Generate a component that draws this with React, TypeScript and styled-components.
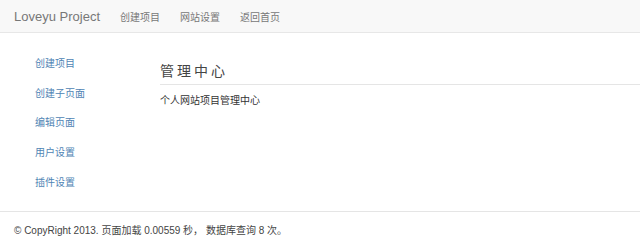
import * as React from 'react';
import styled, { createGlobalStyle } from 'styled-components';

const GlobalStyle = createGlobalStyle`
  html, body {
    margin: 0;
    padding: 0;
    background: #fff;
  }
  body {
    font-family: "Liberation Sans", "Noto Sans CJK SC", sans-serif;
    color: #333;
  }
`;

const Navbar = styled.div`
  height: 33px;
  background-color: #f8f8f8;
  border-bottom: 1px solid #e7e7e7;
  display: flex;
  align-items: center;
  padding-left: 14px;
  box-sizing: border-box;
`;

const Brand = styled.a`
  font-size: 13px;
  color: #777;
  text-decoration: none;
  margin-right: 20px;
`;

const NavLink = styled.a`
  font-size: 10px;
  color: #777;
  text-decoration: none;
  margin-right: 20px;
`;

const Body = styled.div`
  display: flex;
  padding-top: 20px;
  height: 158px;
  border-bottom: 1px solid #e5e5e5;
`;

const Sidebar = styled.ul`
  list-style: none;
  margin: 0;
  padding: 0 0 0 35px;
  width: 125px;
  display: flex;
  flex-direction: column;
`;

const SideItem = styled.li`
  height: 29.7px;
  line-height: 18px;
`;

const SideLink = styled.a`
  font-size: 10px;
  color: #4f84b4;
  text-decoration: none;
`;

const Main = styled.div`
  flex: 1;
`;

const Heading = styled.h1`
  margin: 9px 0 0;
  padding-bottom: 4px;
  font-size: 14px;
  font-weight: normal;
  letter-spacing: 3px;
  line-height: 18px;
  color: #444;
  border-bottom: 1px solid #e5e5e5;
`;

const Text = styled.p`
  margin: 9px 0 0;
  font-size: 10px;
  line-height: 14px;
  color: #333;
`;

const Footer = styled.div`
  padding: 12px 0 0 14px;
  font-size: 10px;
  line-height: 14px;
  color: #444;
`;

const sideItems = ['创建项目', '创建子页面', '编辑页面', '用户设置', '插件设置'];

const App: React.FC = () => (
  <>
    <GlobalStyle />
    <Navbar>
      <Brand href="#">Loveyu Project</Brand>
      <NavLink href="#">创建项目</NavLink>
      <NavLink href="#">网站设置</NavLink>
      <NavLink href="#">返回首页</NavLink>
    </Navbar>
    <Body>
      <Sidebar>
        {sideItems.map((item) => (
          <SideItem key={item}>
            <SideLink href="#">{item}</SideLink>
          </SideItem>
        ))}
      </Sidebar>
      <Main>
        <Heading>管理中心</Heading>
        <Text>个人网站项目管理中心</Text>
      </Main>
    </Body>
    <Footer>© CopyRight 2013. 页面加载 0.00559 秒， 数据库查询 8 次。</Footer>
  </>
);

export default App;
